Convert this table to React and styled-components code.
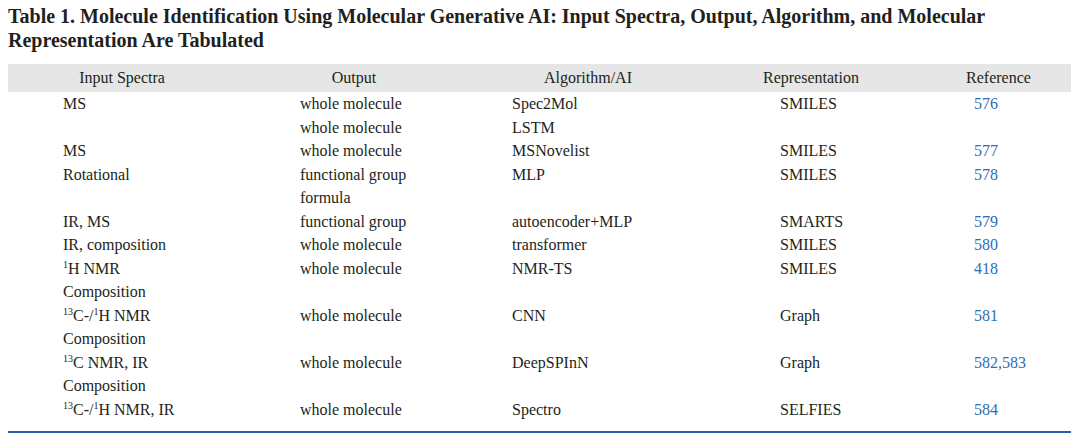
import React from "react";
import styled, { createGlobalStyle } from "styled-components";

const GlobalStyle = createGlobalStyle`
  html, body { margin: 0; padding: 0; background: #ffffff; }
  body {
    font-family: "Liberation Serif", "Times New Roman", serif;
    color: #231f20;
  }
`;

const COLS = "228px 236px 232px 214px 153px";
const INDENTS = [55, 64, 40, 76, 56];

const Page = styled.div`
  padding: 4px 9px 0 8px;
`;

const Caption = styled.h1`
  margin: 0 0 12px 0;
  font-size: 20px;
  line-height: 24px;
  font-weight: bold;
  color: #231f20;
  white-space: nowrap;
`;

const Table = styled.div`
  border-bottom: 2px solid #2b5ea8;
  padding-bottom: 10px;
`;

const HeaderRow = styled.div`
  display: grid;
  grid-template-columns: ${COLS};
  height: 28px;
  align-items: center;
  background: #e6e6e6;
  font-size: 16px;
`;

const HeadCell = styled.div`
  text-align: center;
  padding-left: ${(p) => p.$shift || 0}px;
`;

const Row = styled.div`
  display: grid;
  grid-template-columns: ${COLS};
  align-items: start;
  font-size: 16px;
  line-height: 23.5px;
`;

const Cell = styled.div`
  padding-left: ${(p) => p.$indent}px;
  color: ${(p) => (p.$link ? "#2e6cb6" : "#231f20")};
  white-space: nowrap;
`;

const Line = styled.div`
  min-height: 23.5px;
`;

const Sup = styled.sup`
  font-size: 10px;
  line-height: 0;
  vertical-align: 6px;
`;

const H1 = () => (<><Sup>1</Sup>H</>);
const C13 = () => (<><Sup>13</Sup>C</>);

const headers = ["Input Spectra", "Output", "Algorithm/AI", "Representation", "Reference"];
const headShift = [0, 0, 0, 0, 8];

const rows = [
  [["MS"], ["whole molecule"], ["Spec2Mol"], ["SMILES"], ["576"]],
  [[""], ["whole molecule"], ["LSTM"], [""], [""]],
  [["MS"], ["whole molecule"], ["MSNovelist"], ["SMILES"], ["577"]],
  [["Rotational"], ["functional group", "formula"], ["MLP"], ["SMILES"], ["578"]],
  [["IR, MS"], ["functional group"], ["autoencoder+MLP"], ["SMARTS"], ["579"]],
  [["IR, composition"], ["whole molecule"], ["transformer"], ["SMILES"], ["580"]],
  [[<><H1 /> NMR</>, "Composition"], ["whole molecule"], ["NMR-TS"], ["SMILES"], ["418"]],
  [[<><C13 />-/<H1 /> NMR</>, "Composition"], ["whole molecule"], ["CNN"], ["Graph"], ["581"]],
  [[<><C13 /> NMR, IR</>, "Composition"], ["whole molecule"], ["DeepSPInN"], ["Graph"], ["582,583"]],
  [[<><C13 />-/<H1 /> NMR, IR</>], ["whole molecule"], ["Spectro"], ["SELFIES"], ["584"]],
];

export default function App() {
  return (
    <>
      <GlobalStyle />
      <Page>
        <Caption>
          Table 1. Molecule Identification Using Molecular Generative AI: Input Spectra, Output, Algorithm, and Molecular
          <br />
          Representation Are Tabulated
        </Caption>
        <Table>
          <HeaderRow>
            {headers.map((h, i) => (
              <HeadCell key={h} $shift={headShift[i]}>{h}</HeadCell>
            ))}
          </HeaderRow>
          {rows.map((r, ri) => (
            <Row key={ri}>
              {r.map((lines, ci) => (
                <Cell key={ci} $indent={INDENTS[ci]} $link={ci === 4}>
                  {lines.map((l, li) => (
                    <Line key={li}>{l}</Line>
                  ))}
                </Cell>
              ))}
            </Row>
          ))}
        </Table>
      </Page>
    </>
  );
}
